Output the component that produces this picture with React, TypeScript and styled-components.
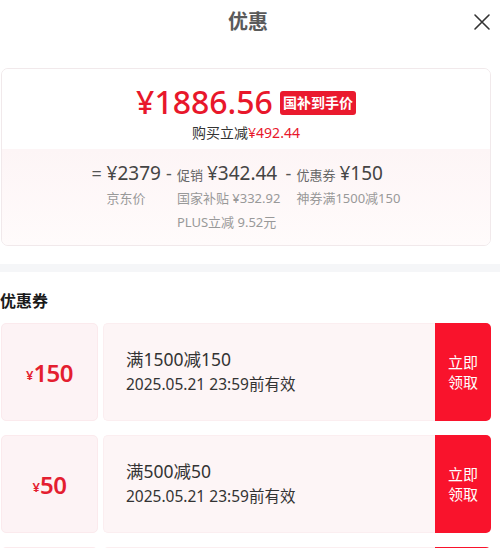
import React from "react";
import styled, { createGlobalStyle } from "styled-components";

const GlobalStyle = createGlobalStyle`
  html, body {
    margin: 0;
    padding: 0;
    background: #ffffff;
  }
  body {
    font-family: "Noto Sans", "Noto Sans CJK SC", sans-serif;
    color: #333;
  }
  button {
    font-family: inherit;
  }
`;

const coupons = [
  { id: 1, amount: 150, title: "满1500减150", expire: "2025.05.21 23:59前有效" },
  { id: 2, amount: 50, title: "满500减50", expire: "2025.05.21 23:59前有效" },
  { id: 3, amount: 20, title: "满200减20", expire: "2025.05.21 23:59前有效" },
];

export default function App() {
  return (
    <>
      <GlobalStyle />
      <Page>
        {/* 顶部标题 */}
        <Header>
          <Title>优惠</Title>
          <CloseButton aria-label="关闭">
            <svg width="18" height="18" viewBox="0 0 18 18">
              <path d="M2 2 L16 16 M16 2 L2 16" stroke="#333" strokeWidth="1.6" strokeLinecap="round" />
            </svg>
          </CloseButton>
        </Header>

        {/* 价格卡片 */}
        <PriceCard>
          <PriceTop>
            <PriceLine>
              <BigPrice>¥1886.56</BigPrice>
              <Badge>国补到手价</Badge>
            </PriceLine>
            <SaveLine>
              购买立减<RedText>¥492.44</RedText>
            </SaveLine>
          </PriceTop>
          <PriceBottom>
            <Formula>
              <Term>
                <Operator $width={15}>=</Operator>
                <TermBody>
                  <AmountRow>
                    <Amount>¥2379</Amount>
                  </AmountRow>
                  <Note>京东价</Note>
                </TermBody>
              </Term>
              <Term>
                <Operator $width={11}>-</Operator>
                <TermBody>
                  <AmountRow>
                    <Label>促销</Label>
                    <Amount>¥342.44</Amount>
                  </AmountRow>
                  <Note>国家补贴 ¥332.92</Note>
                  <Note>PLUS立减 9.52元</Note>
                </TermBody>
              </Term>
              <Term>
                <Operator $width={11}>-</Operator>
                <TermBody>
                  <AmountRow>
                    <Label>优惠券</Label>
                    <Amount>¥150</Amount>
                  </AmountRow>
                  <Note>神券满1500减150</Note>
                </TermBody>
              </Term>
            </Formula>
          </PriceBottom>
        </PriceCard>

        <Divider />

        {/* 优惠券列表 */}
        <SectionTitle>优惠券</SectionTitle>
        <CouponList>
          {coupons.map((c) => (
            <Coupon key={c.id}>
              <CouponValue>
                <Yen>¥</Yen>
                <ValueNum>{c.amount}</ValueNum>
              </CouponValue>
              <CouponInfo>
                <CouponTitle>{c.title}</CouponTitle>
                <CouponDate>{c.expire}</CouponDate>
              </CouponInfo>
              <GetButton>
                立即
                <br />
                领取
              </GetButton>
            </Coupon>
          ))}
        </CouponList>
      </Page>
    </>
  );
}

const Page = styled.div`
  width: 500px;
  height: 548px;
  overflow: hidden;
  padding: 0 9px 0 1px;
  box-sizing: border-box;
`;

const Header = styled.div`
  position: relative;
  height: 44px;
  display: flex;
  align-items: center;
  justify-content: center;
  margin-bottom: 24px;
`;

const Title = styled.div`
  font-size: 20px;
  font-weight: 700;
  color: #5a5a5a;
  margin-left: 4px;
  line-height: 28px;
`;

const CloseButton = styled.button`
  position: absolute;
  right: 0;
  top: 13px;
  width: 18px;
  height: 18px;
  padding: 0;
  border: none;
  background: none;
  display: flex;
`;

const PriceCard = styled.div`
  border: 1px solid #f1e9eb;
  border-radius: 7px;
  overflow: hidden;
`;

const PriceTop = styled.div`
  background: #ffffff;
  padding: 16px 0 6px;
  display: flex;
  flex-direction: column;
  align-items: center;
`;

const PriceLine = styled.div`
  display: flex;
  align-items: center;
  gap: 7px;
  height: 34px;
`;

const BigPrice = styled.div`
  font-size: 32px;
  font-weight: 500;
  line-height: 34px;
  color: #e8172b;
`;

const Badge = styled.div`
  background: #ea1a2e;
  color: #fff;
  font-size: 14px;
  font-weight: 700;
  line-height: 24px;
  padding: 0 3px;
  border-radius: 3px;
  margin-top: 2px;
`;

const SaveLine = styled.div`
  font-size: 14px;
  color: #333;
  line-height: 20px;
  margin-top: 4px;
`;

const RedText = styled.span`
  color: #e8172b;
`;

const PriceBottom = styled.div`
  background: linear-gradient(#fdf5f6, #fffbfb);
  padding: 11px 0 11px;
  display: flex;
  justify-content: center;
`;

const Formula = styled.div`
  display: flex;
  gap: 5px;
`;

const Term = styled.div`
  display: flex;
`;

const Operator = styled.div<{ $width: number }>`
  width: ${(p) => p.$width}px;
  flex-shrink: 0;
  font-size: 18px;
  line-height: 26px;
  color: #555;
`;

const TermBody = styled.div`
  display: flex;
  flex-direction: column;
`;

const AmountRow = styled.div`
  display: flex;
  align-items: baseline;
  gap: 4px;
  height: 26px;
  line-height: 26px;
`;

const Label = styled.span`
  font-size: 13px;
  color: #666;
`;

const Amount = styled.span`
  font-size: 19px;
  color: #444;
`;

const Note = styled.div`
  font-size: 13px;
  color: #999;
  line-height: 24px;
  white-space: nowrap;
`;

const Divider = styled.div`
  height: 8px;
  background: #f5f6f8;
  margin: 18px -9px 0 -1px;
`;

const SectionTitle = styled.div`
  font-size: 16px;
  font-weight: 700;
  color: #1a1a1a;
  margin: 17px 0 0 -1px;
  line-height: 24px;
`;

const CouponList = styled.div`
  display: flex;
  flex-direction: column;
  gap: 14px;
  margin-top: 10px;
`;

const Coupon = styled.div`
  display: flex;
  height: 98px;
  gap: 5px;
`;

const CouponValue = styled.div`
  width: 97px;
  box-sizing: border-box;
  background: #fdf3f5;
  border: 1px solid #fbeaed;
  border-radius: 5px;
  display: flex;
  align-items: center;
  justify-content: center;
  color: #e41e30;
`;

const Yen = styled.span`
  font-size: 13px;
  font-weight: 600;
  margin-top: 6px;
`;

const ValueNum = styled.span`
  font-size: 24px;
  font-weight: 600;
  letter-spacing: -0.5px;
`;

const CouponInfo = styled.div`
  flex: 1;
  background: #fdf5f6;
  border: 1px solid #fbeef0;
  border-right: none;
  border-radius: 5px 0 0 5px;
  display: flex;
  flex-direction: column;
  justify-content: center;
  padding-left: 22px;
  padding-bottom: 2px;
`;

const CouponTitle = styled.div`
  font-size: 17.5px;
  color: #333;
  line-height: 26px;
`;

const CouponDate = styled.div`
  font-size: 15.5px;
  color: #333;
  line-height: 24px;
`;

const GetButton = styled.button`
  width: 56px;
  margin-left: -5px;
  border: none;
  background: #f9132c;
  color: #fff;
  font-size: 15px;
  line-height: 20px;
  border-radius: 0 5px 5px 0;
  padding: 0;
`;
